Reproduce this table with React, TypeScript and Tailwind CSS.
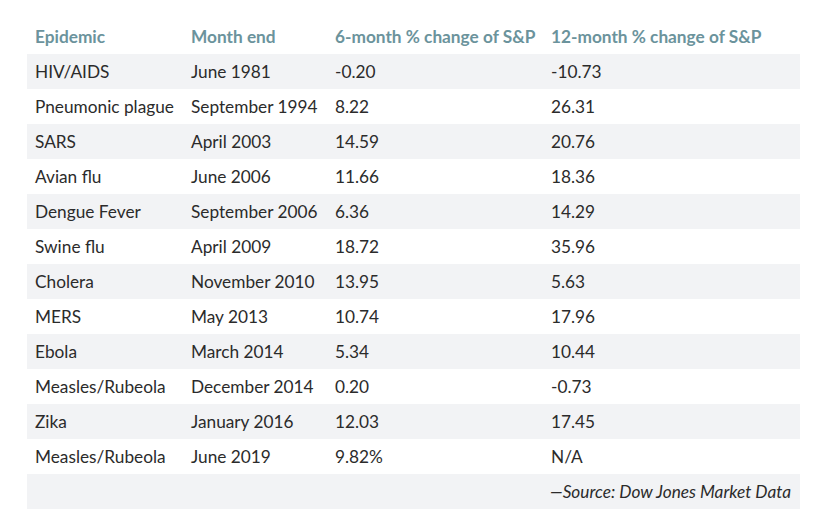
const rows: [string, string, string, string][] = [
  ["HIV/AIDS", "June 1981", "-0.20", "-10.73"],
  ["Pneumonic plague", "September 1994", "8.22", "26.31"],
  ["SARS", "April 2003", "14.59", "20.76"],
  ["Avian flu", "June 2006", "11.66", "18.36"],
  ["Dengue Fever", "September 2006", "6.36", "14.29"],
  ["Swine flu", "April 2009", "18.72", "35.96"],
  ["Cholera", "November 2010", "13.95", "5.63"],
  ["MERS", "May 2013", "10.74", "17.96"],
  ["Ebola", "March 2014", "5.34", "10.44"],
  ["Measles/Rubeola", "December 2014", "0.20", "-0.73"],
  ["Zika", "January 2016", "12.03", "17.45"],
  ["Measles/Rubeola", "June 2019", "9.82%", "N/A"],
];

export default function App() {
  return (
    <div className="w-[828px] h-[524px] bg-white pt-[19px] pl-[27px] font-['Lato',sans-serif] text-[17.25px] text-[#2b2b2b]">
      <table className="w-[773px] table-fixed border-collapse">
        <colgroup>
          <col className="w-[156px]" />
          <col className="w-[144px]" />
          <col className="w-[216px]" />
          <col />
        </colgroup>
        <thead>
          <tr className="h-[35px] text-left text-[#6b939c] whitespace-nowrap">
            <th className="px-2 font-bold">Epidemic</th>
            <th className="px-2 font-bold">Month end</th>
            <th className="px-2 font-bold">6-month % change of S&amp;P</th>
            <th className="px-2 font-bold">12-month % change of S&amp;P</th>
          </tr>
        </thead>
        <tbody>
          {rows.map((r, i) => (
            <tr key={i} className={`h-[35px] whitespace-nowrap ${i % 2 === 0 ? "bg-[#f2f3f5]" : "bg-white"}`}>
              <td className="px-2">{r[0]}</td>
              <td className="px-2">{r[1]}</td>
              <td className="px-2">{r[2]}</td>
              <td className="px-2">{r[3]}</td>
            </tr>
          ))}
          <tr className="h-[35px] bg-[#f2f3f5]">
            <td colSpan={4} className="pr-[9px] text-right italic">
              —Source: Dow Jones Market Data
            </td>
          </tr>
        </tbody>
      </table>
    </div>
  );
}
